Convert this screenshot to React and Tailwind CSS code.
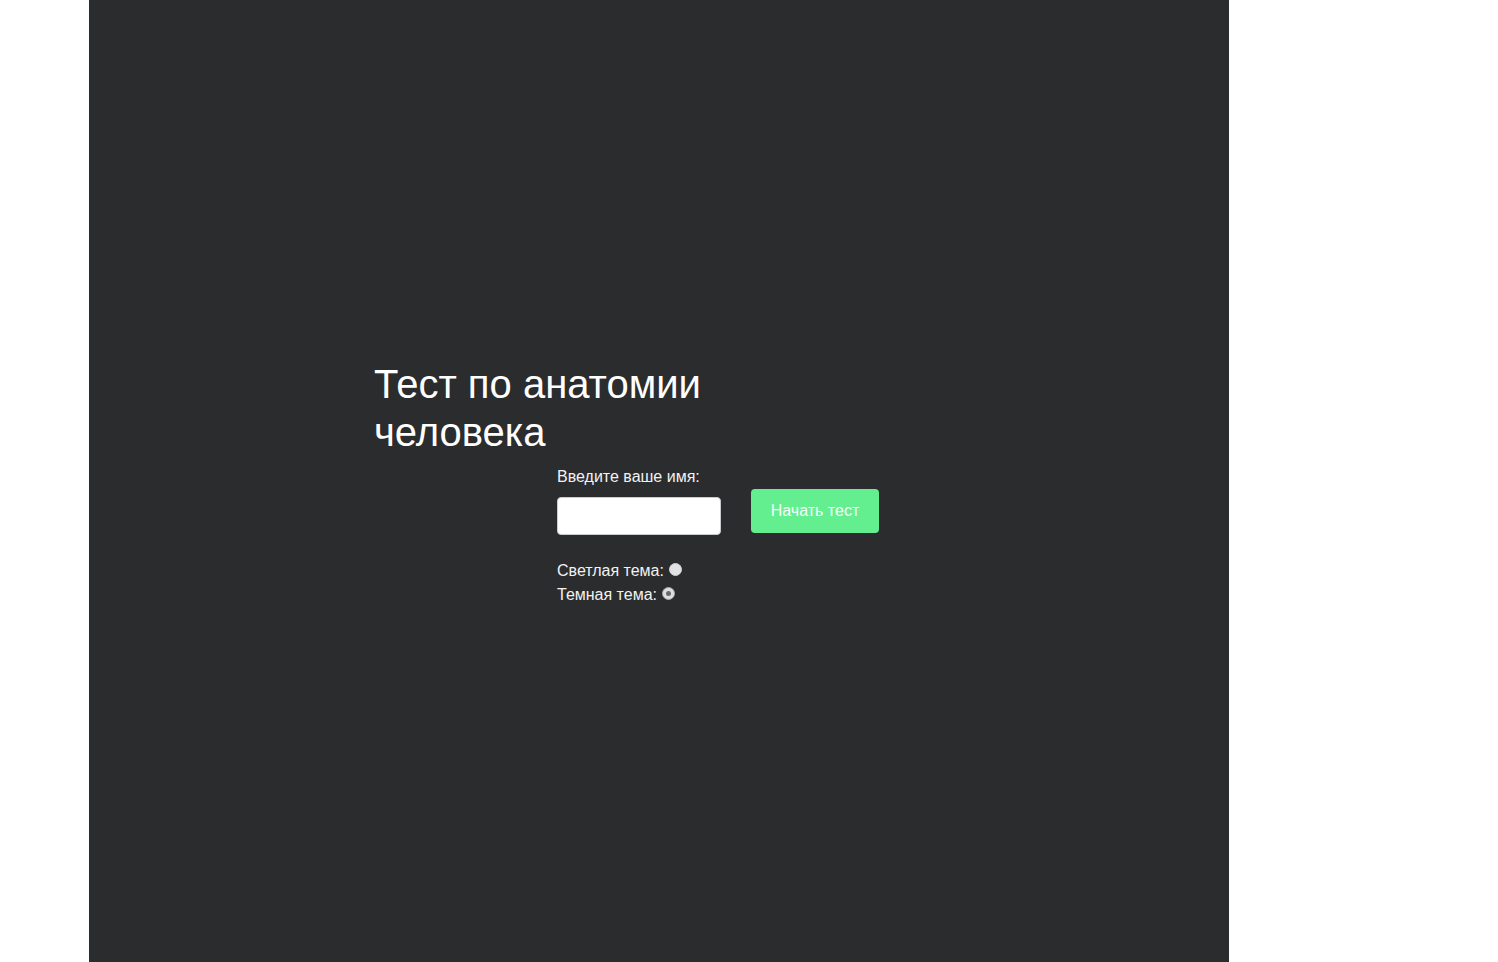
import React, { useState } from 'react';

// ─── Radio dot drawn by hand (native one is greyed out in the shot) ──
const Radio = ({ checked, onSelect }) => (
  <span className="relative ml-[5px] mb-[3px] inline-flex h-[13px] w-[13px] items-center justify-center">
    <input
      type="radio"
      name="theme"
      checked={checked}
      onChange={onSelect}
      className="absolute inset-0 m-0 cursor-pointer opacity-0"
    />
    {checked ? (
      <span className="flex h-[13px] w-[13px] items-center justify-center rounded-full border border-[#a9a9a9] bg-[#dedede]">
        <span className="h-[5px] w-[5px] rounded-full bg-[#6a6a6a]" />
      </span>
    ) : (
      <span className="h-[13px] w-[13px] rounded-full border border-[#d2d2d2] bg-[#e2e2e2]" />
    )}
  </span>
);

// ─── Start screen of the anatomy quiz ─────────────────────────────
export default function App() {
  const [name, setName] = useState('');
  const [theme, setTheme] = useState('dark');

  return (
    <div className="min-h-screen bg-white font-['Liberation_Sans',Arial,sans-serif]">
      <div className="ml-[89px] flex h-[962px] w-[1140px] flex-col justify-center bg-[#2b2c2e] pl-[285px] text-white">
        {/* Title */}
        <h1 className="mt-[4px] w-[340px] text-[40px] font-normal leading-[48px] text-white">
          Тест по анатомии человека
        </h1>

        {/* Form */}
        <div className="ml-[183px] mt-[12px] flex flex-col">
          <label htmlFor="name" className="text-[16px] leading-[18px] text-[#f2f2f2]">
            Введите ваше имя:
          </label>

          <div className="flex items-start">
            <input
              id="name"
              value={name}
              onChange={(e) => setName(e.target.value)}
              className="mt-[11px] h-[38px] w-[164px] rounded-[4px] border border-[#c9cbd1] bg-white px-2 text-[16px] text-black outline-none"
            />
            <button
              type="button"
              className="ml-[30px] mt-[3px] h-[44px] w-[128px] rounded-[4px] bg-[#63ef90] text-[16px] text-[#f4fff7]"
            >
              Начать тест
            </button>
          </div>

          {/* Theme switch */}
          <div className="mt-[24px] flex flex-col text-[16px] leading-[24px] text-[#f2f2f2]">
            <label className="flex items-center">
              Светлая тема:
              <Radio checked={theme === 'light'} onSelect={() => setTheme('light')} />
            </label>
            <label className="flex items-center">
              Темная тема:
              <Radio checked={theme === 'dark'} onSelect={() => setTheme('dark')} />
            </label>
          </div>
        </div>
      </div>
    </div>
  );
}
